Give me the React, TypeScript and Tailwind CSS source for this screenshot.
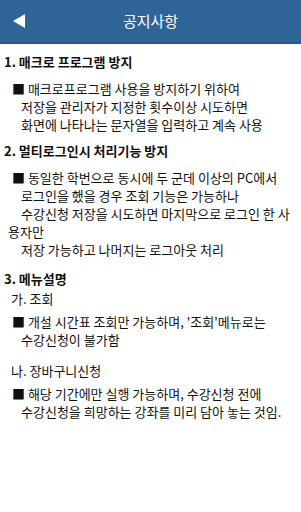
import React from 'react';

const font = { fontFamily: '"Noto Sans CJK KR", Roboto, sans-serif' };

// indent: 0 = wrapped text, 1 = bullet line, 2 = continuation
type Line = [number, string];

interface Section {
  title: string;
  blocks: { sub?: string; lines: Line[] }[];
}

const sections: Section[] = [
  {
    title: '1. 매크로 프로그램 방지',
    blocks: [
      {
        lines: [
          [1, '■ 매크로프로그램 사용을 방지하기 위하여'],
          [2, '저장을 관리자가 지정한 횟수이상 시도하면'],
          [2, '화면에 나타나는 문자열을 입력하고 계속 사용'],
        ],
      },
    ],
  },
  {
    title: '2. 멀티로그인시 처리기능 방지',
    blocks: [
      {
        lines: [
          [1, '■ 동일한 학번으로 동시에 두 군데 이상의 PC에서'],
          [2, '로그인을 했을 경우 조회 기능은 가능하나'],
          [2, '수강신청 저장을 시도하면 마지막으로 로그인 한 사'],
          [0, '용자만'],
          [2, '저장 가능하고 나머지는 로그아웃 처리'],
        ],
      },
    ],
  },
  {
    title: '3. 메뉴설명',
    blocks: [
      {
        sub: '가. 조회',
        lines: [
          [1, "■ 개설 시간표 조회만 가능하며, '조회'메뉴로는"],
          [2, '수강신청이 불가함'],
        ],
      },
      {
        sub: '나. 장바구니신청',
        lines: [
          [1, '■ 해당 기간에만 실행 가능하며, 수강신청 전에'],
          [2, '수강신청을 희망하는 강좌를 미리 담아 놓는 것임.'],
        ],
      },
    ],
  },
];

const indentClass = ['pl-0', 'pl-[4px]', 'pl-[13px]'];

export default function App() {
  return (
    <div className="w-[301px] h-[512px] bg-white overflow-hidden" style={font}>
      <div className="h-[44px] bg-[#2f6497] border-b-2 border-[#28588a] flex items-center relative">
        <svg width="12" height="14" viewBox="0 0 12 14" className="ml-[13px]">
          <polygon points="12,0 12,14 0,7" fill="#ffffff" />
        </svg>
        <div className="absolute inset-0 flex items-center justify-center text-white text-[15px]">
          공지사항
        </div>
      </div>

      <div className="px-[4px] pt-[8px] text-[13px] leading-[18px] text-[#111]">
        {sections.map((s, i) => (
          <div key={i} className={i === 2 ? 'mt-[10px]' : 'mb-[7px]'}>
            <div className="font-bold h-[20px] leading-[20px]">{s.title}</div>
            {s.blocks.map((b, j) => (
              <div key={j} className={b.sub ? (j > 0 ? 'mt-[13px]' : 'mt-[1px]') : 'mt-[8px]'}>
                {b.sub && <div className="whitespace-pre mb-[5px] pl-[7px]">{b.sub}</div>}
                <div className="pl-[4px]">
                  {b.lines.map(([ind, text], k) => (
                    <div key={k} className={`whitespace-pre ${indentClass[ind]}`}>
                      {text}
                    </div>
                  ))}
                </div>
              </div>
            ))}
          </div>
        ))}
      </div>
    </div>
  );
}
